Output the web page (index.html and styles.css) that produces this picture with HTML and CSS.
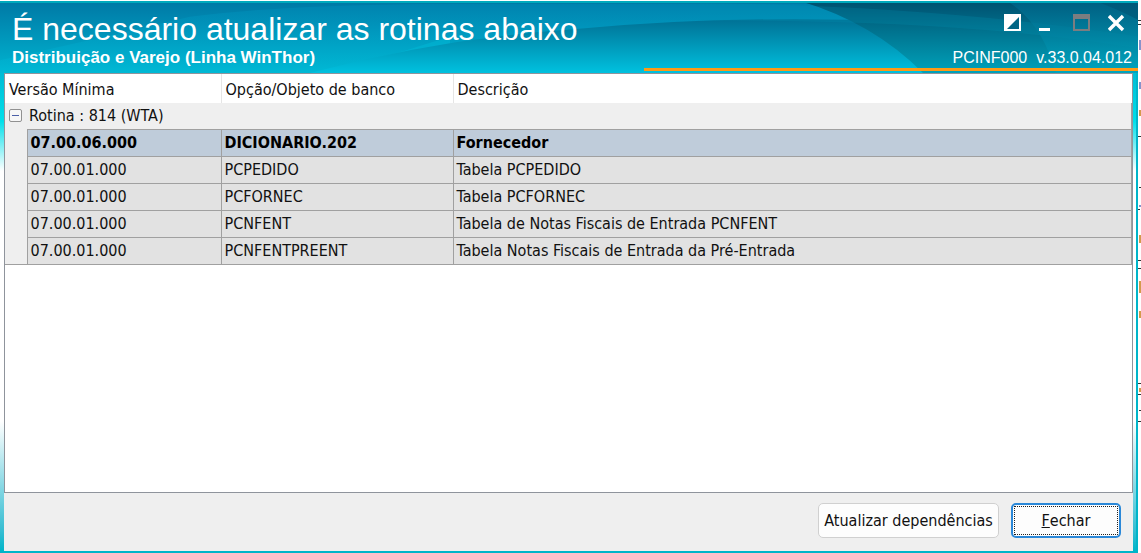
FILE: index.html
```html
<!DOCTYPE html>
<html lang="pt-BR">
<head>
<meta charset="utf-8">
<title>PCINF000 - Atualização de rotinas</title>
<link rel="stylesheet" href="styles.css">
</head>
<body>
<svg class="backdrop" viewBox="0 0 4 553" preserveAspectRatio="none" aria-hidden="true">
  <path fill="#333" d="M1 20h3v1h-3zM1 24h3v1h-3zM1 136h3v1h-3zM2 187h2v1h-2zM1 209h2v1h-2zM1 260h3v1h-3zM1 268h3v1h-3zM1 383h3v1h-3zM1 394h3v1h-3zM2 410h2v1h-2zM1 421h3v1h-3z"/>
  <path fill="#8792cb" d="M2 40h2v10h-2zM2 82h2v7h-2zM2 205h2v2h-2z"/>
  <path fill="#d49a4c" d="M2 110h2v6h-2zM2 235h2v8h-2zM2 281h2v12h-2zM2 311h2v7h-2zM2 388h2v4h-2z"/>
</svg>
<main class="window">
  <header class="banner">
    <svg class="waves" viewBox="0 0 1138 73" preserveAspectRatio="none" aria-hidden="true">
      <defs>
        <linearGradient id="base" x1="0" y1="0" x2="0" y2="1"><stop offset="0" stop-color="#0078a5"/><stop offset="1" stop-color="#00b4d0"/></linearGradient>
        <linearGradient id="mid" x1="0" y1="0" x2="0" y2="1"><stop offset="0" stop-color="#008fbb"/><stop offset="1" stop-color="#00c0dc"/></linearGradient>
        <linearGradient id="deep" gradientUnits="userSpaceOnUse" x1="0" y1="18" x2="0" y2="73"><stop offset="0" stop-color="#007094"/><stop offset="1" stop-color="#00c1df"/></linearGradient>
        <linearGradient id="dark" x1="0" y1="0" x2="0" y2="1"><stop offset="0" stop-color="#00506f"/><stop offset="1" stop-color="#00a2ba"/></linearGradient>
        <linearGradient id="edge" x1="0" y1="0" x2="0" y2="1"><stop offset="0" stop-color="#00668b"/><stop offset="1" stop-color="#00a7c0"/></linearGradient>
      </defs>
      <rect width="1138" height="73" fill="url(#base)"/>
      <path fill="url(#mid)" d="M190 16Q270 5 420 3H1138V73H0V60Q90 40 190 16Z" opacity=".4"/>
      <path fill="#00c4dc" opacity=".35" d="M310 73Q350 64 400 52L450 36V73Z"/>
      <path fill="url(#deep)" d="M310 73Q440 38 570 29Q700 16 850 19L1138 30V73Z"/>
      <path fill="url(#dark)" d="M800 0Q873 22 923 73H1138V0Z"/>
      <path fill="#0094b5" opacity=".22" d="M700 2Q940 5 1138 36V48Q960 18 700 20Z"/>
      <path fill="url(#edge)" opacity=".65" d="M1007 0Q1042 22 1056 73H1138V0Z"/>
      <path fill="#00506f" opacity=".5" d="M1095 0Q1115 7 1138 19V0Z"/>
      <path fill="#00aabd" d="M0 0H1138V2H0Z"/>
    </svg>
    <div class="heading">
      <h1>É necessário atualizar as rotinas abaixo</h1>
      <p class="product">Distribuição e Varejo (Linha WinThor)</p>
    </div>
    <div class="status">
      <div class="controls">
        <button type="button" aria-label="Recolher"><svg viewBox="0 0 18 18"><path fill="#fff" d="M1 0h17v17H1z"/><path fill="#006584" d="M16 3v12H4z"/></svg></button>
        <button type="button" aria-label="Minimizar"><svg viewBox="0 0 18 18"><path fill="#fff" d="M1 14h11v3H1z"/></svg></button>
        <button type="button" aria-label="Maximizar" disabled><svg viewBox="0 0 18 18"><path fill="#7c7d80" fill-rule="evenodd" d="M0 0h17v17H0zM2 5v10h13V5z"/></svg></button>
        <button type="button" aria-label="Fechar janela"><svg viewBox="0 0 18 18"><path d="m1 2 14 14M15 2 1 16" stroke="#fff" stroke-width="3.4"/></svg></button>
      </div>
      <p class="version"><span>PCINF000</span><span>v.33.0.04.012</span></p>
    </div>
  </header>
  <section class="content">
    <div class="list">
      <table>
        <colgroup><col class="gutter"><col class="min"><col class="option"><col></colgroup>
        <thead>
          <tr><th scope="col" colspan="2">Versão Mínima</th><th scope="col">Opção/Objeto de banco</th><th scope="col">Descrição</th></tr>
        </thead>
        <tbody>
          <tr class="group"><td colspan="4"><div class="group-label"><button type="button" class="toggle" aria-label="Recolher grupo" aria-expanded="true"></button>Rotina : 814 (WTA)</div></td></tr>
          <tr class="selected"><td class="indent"></td><td>07.00.06.000</td><td>DICIONARIO.202</td><td>Fornecedor</td></tr>
          <tr><td class="indent"></td><td>07.00.01.000</td><td>PCPEDIDO</td><td>Tabela PCPEDIDO</td></tr>
          <tr><td class="indent"></td><td>07.00.01.000</td><td>PCFORNEC</td><td>Tabela PCFORNEC</td></tr>
          <tr><td class="indent"></td><td>07.00.01.000</td><td>PCNFENT</td><td>Tabela de Notas Fiscais de Entrada PCNFENT</td></tr>
          <tr><td class="indent"></td><td>07.00.01.000</td><td>PCNFENTPREENT</td><td>Tabela Notas Fiscais de Entrada da Pré-Entrada</td></tr>
        </tbody>
      </table>
    </div>
    <footer class="actions">
      <button type="button" class="action">Atualizar dependências</button>
      <button type="button" class="action primary"><span><u>F</u>echar</span></button>
    </footer>
  </section>
</main>
</body>
</html>
```
FILE: styles.css
```css
* { box-sizing: border-box; }

body {
  margin: 0;
  height: 100vh;
  padding: 1px 3px 0 0;
  display: flex;
  background: #fff;
  color: #111;
  font: 16px/20px "DejaVu Sans Condensed", "DejaVu Sans", sans-serif;
}

button { font: inherit; color: inherit; padding: 0; }
h1, p { margin: 0; }

.backdrop { position: absolute; top: 0; right: 0; width: 4px; height: 100%; }

.window {
  position: relative;
  flex: 1;
  display: flex;
  flex-direction: column;
  border-bottom: 2px solid #00b5c9;
  background: linear-gradient(#00bcd5 73px, #00dfea 120px, #fff 170px, #fff 420px, #36bdd2 530px, #00b5c9);
  border-right: 2px solid #00b5c9;
}

.banner {
  position: relative;
  display: flex;
  justify-content: space-between;
  margin-right: -2px;
  height: 72px;
  color: #fff;
  font-family: "Liberation Sans", Arial, sans-serif;
}

.waves { position: absolute; inset: 0; width: 100%; height: 100%; }
.heading, .status { position: relative; }
.heading { padding: 10px 0 0 12px; }
h1 { font-size: 32px; line-height: 36px; font-weight: 400; white-space: nowrap; }
.product { font-size: 17px; line-height: 22px; font-weight: 700; }

.status {
  width: 494px;
  height: 70px;
  display: flex;
  flex-direction: column;
  align-items: flex-end;
  padding: 13px 6px 0 0;
  border-bottom: 3px solid #ff9a16;
}

.controls { display: flex; gap: 17px; padding-right: 6px; }
.controls button { width: 18px; height: 18px; border: 0; background: none; }
.controls svg { display: block; width: 18px; height: 18px; }
.version { display: flex; gap: 9px; padding-top: 16px; font-size: 16px; line-height: 20px; }

.content {
  flex: 1;
  display: flex;
  flex-direction: column;
  margin: 0 3px 0 4px;
  background: #efefef;
}

.list { flex: 1; border: 1px solid #8f949c; background: #fff; }

table { width: 100%; border-collapse: collapse; table-layout: fixed; }
.gutter { width: 22px; }
.min { width: 194px; }
.option { width: 232px; }
th, td { padding: 0 3px; text-align: left; white-space: nowrap; }
th { height: 29px; padding: 2px 4px 0; font-weight: 400; border-right: 1px solid #e5e5e5; }
th:last-child { border-right: 0; }
td { height: 27px; border: 1px solid #a0a0a0; background: #e2e2e2; }
.group td { height: 26px; padding: 0 4px; border-width: 0 1px 0 0; background: #efefef; }
td.indent { border-width: 0; background: #efefef; }
tr:last-child td.indent { border-bottom-width: 1px; }
.selected td { background: #bfccda; color: #000; font-weight: 700; }
.selected td.indent { background: #efefef; }

.group-label { display: flex; align-items: center; gap: 7px; }
.toggle {
  width: 13px;
  height: 13px;
  border: 1px solid #919191;
  border-radius: 2px;
  background: linear-gradient(#4c60a8, #4c60a8) center / 7px 1px no-repeat, #f7f7f7;
}

.actions { display: flex; justify-content: flex-end; gap: 12px; padding: 10px 12px 13px 0; }
.action {
  min-width: 110px;
  height: 35px;
  padding: 2px;
  border: 1px solid #d0d0d0;
  border-radius: 5px;
  background: #fdfdfd;
}
.action:first-child { min-width: 181px; }
.primary { border: 2px solid #2b88d8; padding: 1px; }
.primary span { display: flex; align-items: center; justify-content: center; height: 100%; border: 1px dotted #222; }
```
